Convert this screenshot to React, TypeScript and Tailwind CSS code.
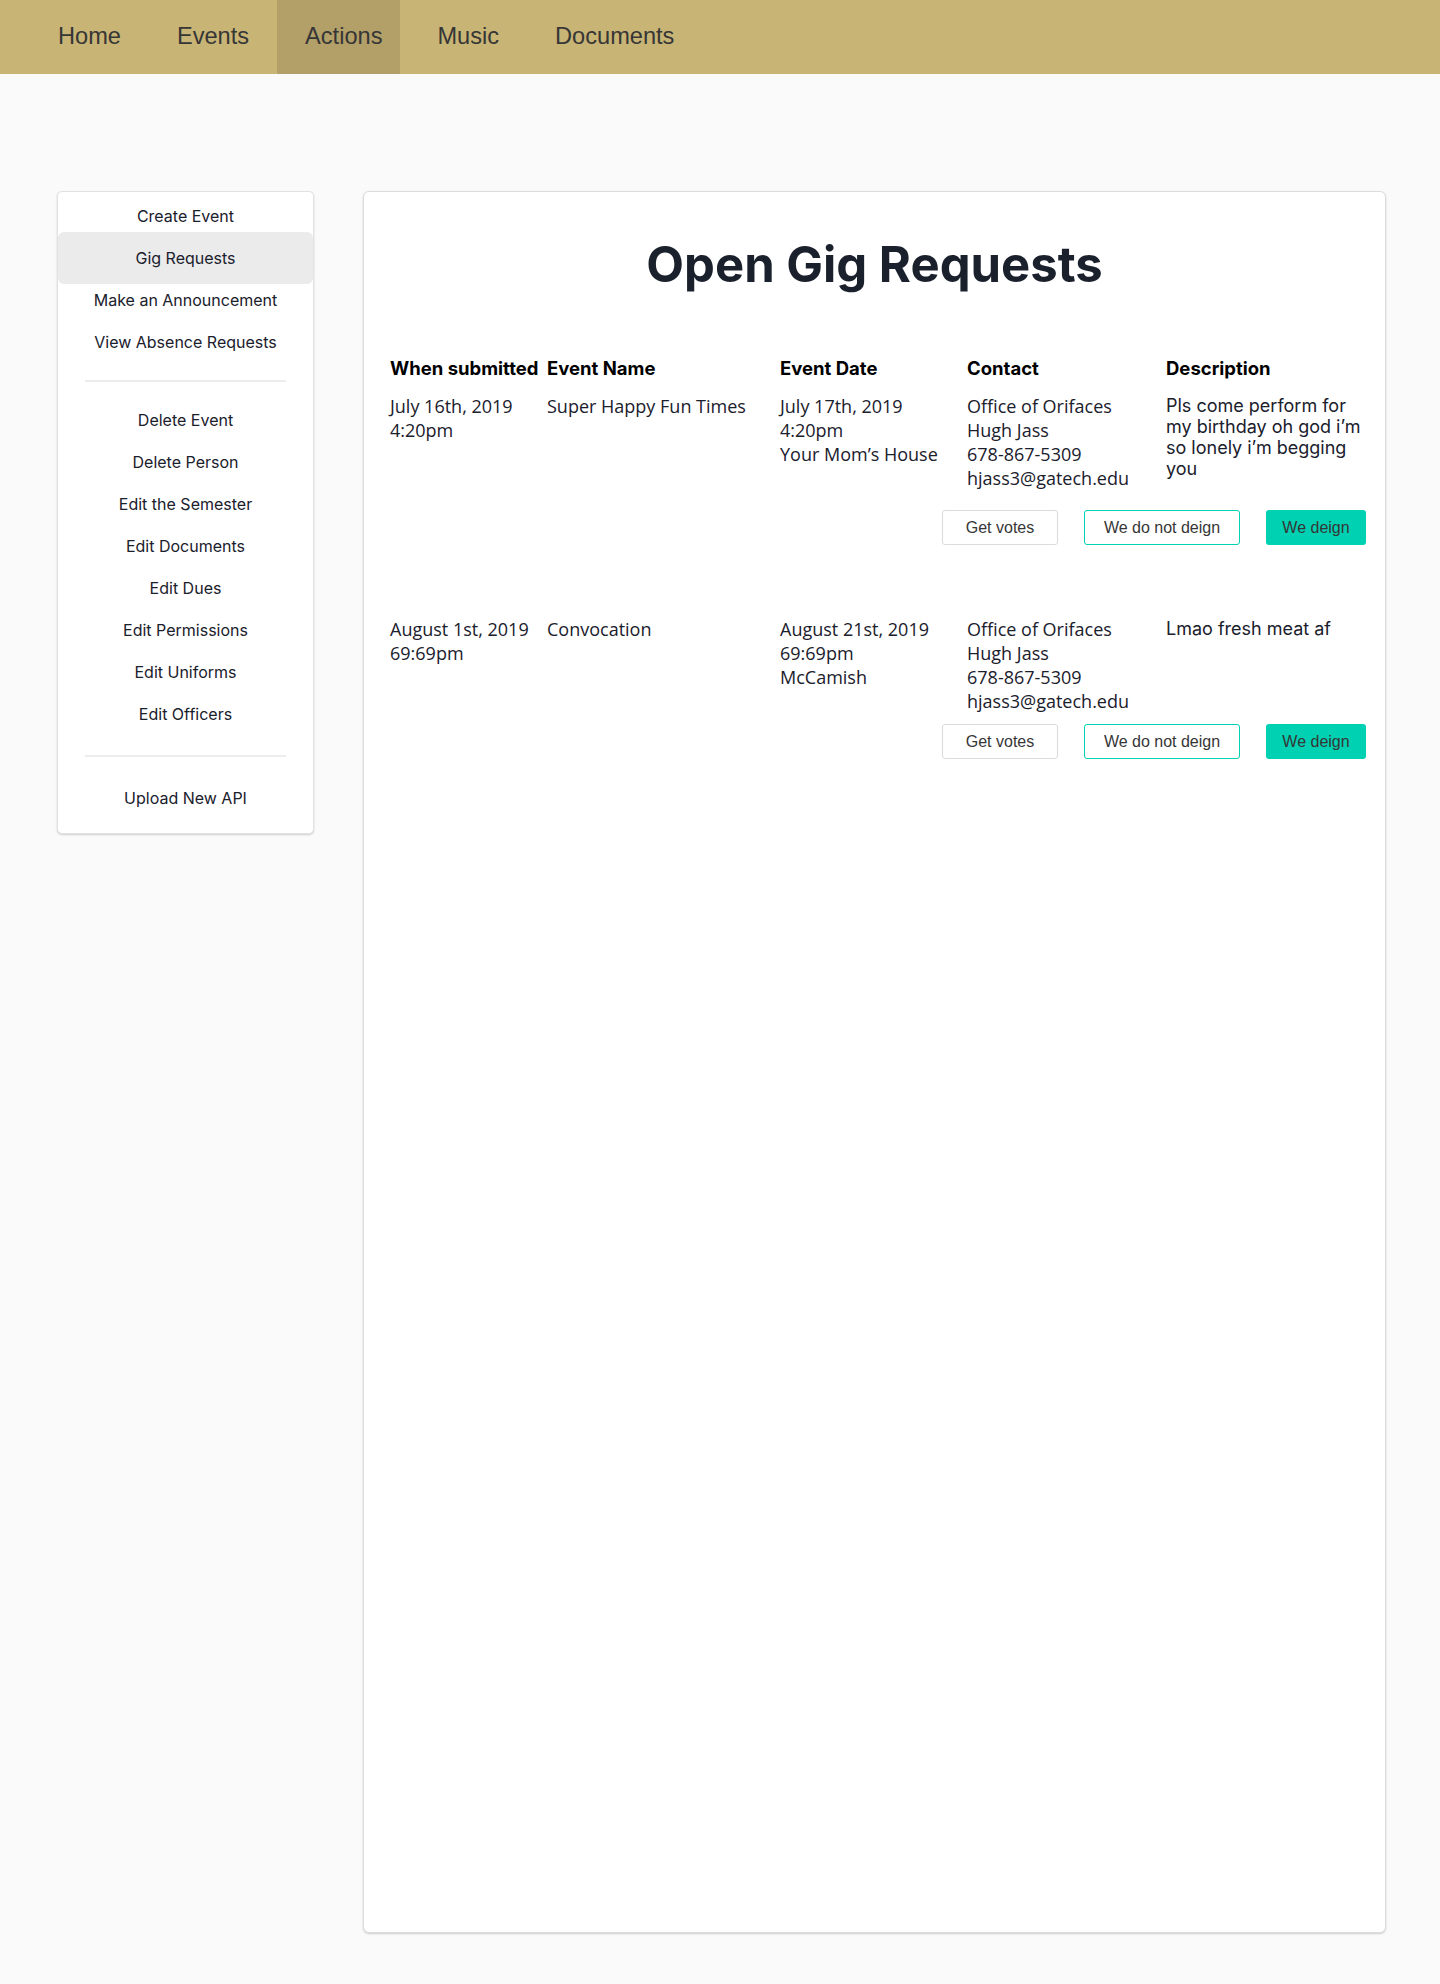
import React from "react";

const navItems = ["Home", "Events", "Actions", "Music", "Documents"];

const sideTop = ["Create Event", "Gig Requests", "Make an Announcement", "View Absence Requests"];
const sideMid = [
  "Delete Event",
  "Delete Person",
  "Edit the Semester",
  "Edit Documents",
  "Edit Dues",
  "Edit Permissions",
  "Edit Uniforms",
  "Edit Officers",
];

type Gig = {
  submitted: string[];
  name: string;
  date: string[];
  contact: string[];
  description: string;
};

const gigs: Gig[] = [
  {
    submitted: ["July 16th, 2019", "4:20pm"],
    name: "Super Happy Fun Times",
    date: ["July 17th, 2019", "4:20pm", "Your Mom\u2019s House"],
    contact: ["Office of Orifaces", "Hugh Jass", "678-867-5309", "hjass3@gatech.edu"],
    description: "Pls come perform for my birthday oh god i\u2019m so lonely i\u2019m begging you",
  },
  {
    submitted: ["August 1st, 2019", "69:69pm"],
    name: "Convocation",
    date: ["August 21st, 2019", "69:69pm", "McCamish"],
    contact: ["Office of Orifaces", "Hugh Jass", "678-867-5309", "hjass3@gatech.edu"],
    description: "Lmao fresh meat af",
  },
];

// nav padding is a bit lopsided around the active tab in the original
const navPad: Record<string, string> = {
  Home: "px-[28px]",
  Events: "px-[28px]",
  Actions: "pl-[28px] pr-[18px] bg-[#b39f68]",
  Music: "pl-[37px] pr-[28px]",
  Documents: "px-[28px]",
};

function SideItem({ label, active }: { label: string; active?: boolean }) {
  if (active) {
    return (
      <div className="relative -my-[5px] flex h-[52px] items-center justify-center rounded-[6px] bg-[#ebebeb] text-[16px] text-[#1a202c]">
        {label}
      </div>
    );
  }
  return <div className="flex h-[42px] items-center justify-center text-[16px] text-[#1a202c]">{label}</div>;
}

function Lines({ lines }: { lines: string[] }) {
  return (
    <div className="font-['Open_Sans',sans-serif] text-[18px] leading-[24px] text-[#1a202c]">
      {lines.map((l) => (
        <div key={l}>{l}</div>
      ))}
    </div>
  );
}

function GigRow({ gig, first }: { gig: Gig; first?: boolean }) {
  return (
    <div className={first ? "mt-[15px]" : "mt-[72px]"}>
      <div className="grid grid-cols-[157px_233px_187px_199px_200px] items-start">
        <Lines lines={gig.submitted} />
        <Lines lines={[gig.name]} />
        <Lines lines={gig.date} />
        <Lines lines={gig.contact} />
        <p className="mb-[21px] pt-[1px] font-['Inter',sans-serif] text-[18px] leading-[21px] text-[#1a202c]">{gig.description}</p>
      </div>
      <div
        className={
          (first ? "mt-[10px]" : "mt-[11px]") +
          " flex justify-end gap-[26px] font-['Liberation_Sans',Arial,sans-serif] text-[16px] text-[#363636]"
        }
      >
        <button className="h-[35px] w-[116px] rounded-[3px] border border-[#dbdbdb] bg-white">Get votes</button>
        <button className="h-[35px] w-[156px] rounded-[3px] border border-[#00d1b2] bg-white">We do not deign</button>
        <button className="h-[35px] w-[100px] rounded-[3px] border border-transparent bg-[#00d1b2]">We deign</button>
      </div>
    </div>
  );
}

export default function App() {
  return (
    <div className="min-h-[1984px] bg-[#fafafa] font-['Inter',sans-serif]">
      <nav className="flex h-[74px] bg-[#c8b475] pl-[30px] font-['Liberation_Sans',Arial,sans-serif] text-[23.6px] text-[#363636]">
        {navItems.map((item) => (
          <div key={item} className={"flex items-center " + navPad[item]}>
            {item}
          </div>
        ))}
      </nav>

      <div className="flex items-start gap-[49px] pl-[57px] pt-[117px]">
        <aside className="w-[257px] rounded-[5px] border border-[#e2e2e2] bg-white pb-[14px] pt-[3px] shadow-[0_1px_2px_rgba(0,0,0,0.18)]">
          {sideTop.map((s) => (
            <SideItem key={s} label={s} active={s === "Gig Requests"} />
          ))}
          <div className="mx-[27px] my-[17px] h-[2px] bg-[#ededed]" />
          {sideMid.map((s) => (
            <SideItem key={s} label={s} />
          ))}
          <div className="mx-[27px] my-[20px] h-[2px] bg-[#ededed]" />
          <SideItem label="Upload New API" />
        </aside>

        <main className="h-[1742px] w-[1023px] rounded-[6px] border border-[#dcdcdc] bg-white pl-[26px] pr-[19px] pt-[44px] shadow-[0_1px_2px_rgba(0,0,0,0.18)]">
          <h1 className="-ml-[26px] -mr-[19px] text-center text-[49px] font-bold leading-[58px] text-[#1a202c]">
            Open Gig Requests
          </h1>

          <div className="mt-[63px] grid grid-cols-[157px_233px_187px_199px_200px] text-[18.5px] font-bold leading-[22px] text-black">
            <div>When submitted</div>
            <div>Event Name</div>
            <div>Event Date</div>
            <div>Contact</div>
            <div>Description</div>
          </div>

          {gigs.map((g, i) => (
            <GigRow key={g.name} gig={g} first={i === 0} />
          ))}
        </main>
      </div>
    </div>
  );
}
